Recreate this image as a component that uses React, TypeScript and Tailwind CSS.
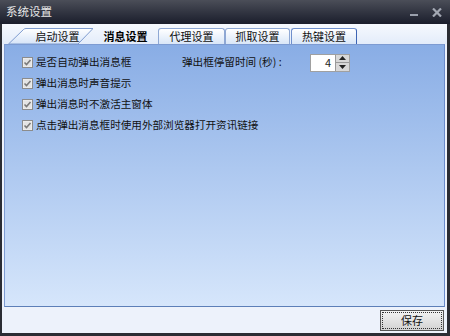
import React, { useState } from "react";

const font = { fontFamily: '"SimSun", "Noto Sans CJK SC", "Liberation Sans", sans-serif' };

const CheckBox: React.FC<{ checked: boolean; onClick: () => void }> = ({ checked, onClick }) => (
  <svg width="11" height="11" viewBox="0 0 11 11" onClick={onClick} className="shrink-0">
    <rect x="0.5" y="0.5" width="10" height="10" fill="#f2f2f2" stroke="#8c8c8c" />
    <rect x="1.5" y="1.5" width="8" height="8" fill="#e4e4e4" />
    {checked && <path d="M2.5 5.5 L4.5 7.5 L8.5 3" fill="none" stroke="#7a7a7a" strokeWidth="1.6" />}
  </svg>
);

const options = [
  "是否自动弹出消息框",
  "弹出消息时声音提示",
  "弹出消息时不激活主窗体",
  "点击弹出消息框时使用外部浏览器打开资讯链接",
];

const Tab: React.FC<{ label: string; className: string; last?: boolean }> = ({ label, className, last }) => (
  <div
    className={`flex h-[16px] items-center justify-center rounded-t-[3px] border border-b-0 bg-gradient-to-b from-[#ffffff] to-[#d9e6f8] text-[11px] leading-none text-[#111] ${
      last ? "border-[#6f8fcc] border-r-[#3d64b4]" : "border-[#8fa8d4]"
    } ${className}`}
  >
    {label}
  </div>
);

export default function App() {
  const [checked, setChecked] = useState([true, true, true, true]);
  const [seconds, setSeconds] = useState(4);

  return (
    <div className="flex h-[336px] w-[450px] flex-col bg-[#2b2d34]" style={font}>
      <div className="flex h-[24px] items-center bg-gradient-to-b from-[#4b4e58] to-[#1b1e2c] pl-[6px] pr-[8px]">
        <span className="text-[11.5px] leading-none text-[#e8e8e8]">系统设置</span>
        <div className="ml-auto flex items-center gap-[14px] text-[#9aa0ac]">
          <div className="mt-[6px] h-[2px] w-[8px] bg-[#9aa0ac]" />
          <svg width="10" height="9" viewBox="0 0 10 9">
            <path d="M1 0.5 L9 8.5 M9 0.5 L1 8.5" stroke="#a3a8b3" strokeWidth="2.2" />
          </svg>
        </div>
      </div>

      <div className="mb-[3px] ml-[2px] mr-[3px] flex flex-1 flex-col bg-[#edf2fb]">
        <div className="flex h-[20px] items-end bg-gradient-to-b from-[#f6f9fe] to-[#e3ecfa] pl-[6px]">
          <div className="relative flex h-[16px] w-[85px] items-center justify-center text-[11px] leading-none text-[#111]">
            <svg className="absolute inset-0" width="85" height="16" viewBox="0 0 85 16">
              <defs>
                <linearGradient id="t1" x1="0" y1="0" x2="0" y2="1">
                  <stop offset="0" stopColor="#ffffff" />
                  <stop offset="1" stopColor="#d6e4f8" />
                </linearGradient>
              </defs>
              <path d="M0.5 16 L15.5 1.5 Q16.5 0.5 18 0.5 L85 0.5 L70 16 Z" fill="url(#t1)" stroke="#7f9ccf" />
            </svg>
            <span className="relative pl-[14px]">启动设置</span>
          </div>
          <div className="flex h-[16px] w-[65px] items-center justify-center text-[11px] font-bold leading-none text-[#000]">
            消息设置
          </div>
          <Tab label="代理设置" className="w-[67px]" />
          <Tab label="抓取设置" className="w-[65px]" />
          <Tab label="热键设置" className="ml-[1px] w-[66px]" last />
        </div>

        <div className="mx-[2px] flex flex-1 flex-col gap-[10px] border border-[#7d9bd2] border-b-[#5d7fb8] border-r-[#6a8bcb] bg-gradient-to-b from-[#89ade5] to-[#d6e6fb] pl-[17px] pt-[12px]">
          {options.map((text, i) => (
            <div key={text} className="flex h-[11px] items-center">
              <div className={`flex items-center gap-[3px] ${i === 0 ? "w-[160px]" : ""}`}>
                <CheckBox
                  checked={checked[i]}
                  onClick={() => setChecked(checked.map((c, j) => (j === i ? !c : c)))}
                />
                <span className="text-[10.6px] leading-none text-[#111]">{text}</span>
              </div>
              {i === 0 && (
                <div className="flex items-center">
                  <span className="w-[128px] text-[10.6px] leading-none text-[#111]">弹出框停留时间 (秒) :</span>
                  <div className="flex h-[18px] w-[40px] border border-[#a0a0a0] bg-white">
                    <div className="flex flex-1 items-center justify-end pr-[4px] text-[11px] leading-none text-[#222]">
                      {seconds}
                    </div>
                    <div className="flex w-[14px] flex-col border-l border-[#9a9a9a] bg-[#d8d8d8]">
                      <button
                        className="flex flex-1 items-center justify-center border-b border-[#9a9a9a]"
                        onClick={() => setSeconds(seconds + 1)}
                      >
                        <svg width="7" height="4" viewBox="0 0 7 4">
                          <path d="M0 4 L3.5 0 L7 4 Z" fill="#222" />
                        </svg>
                      </button>
                      <button
                        className="flex flex-1 items-center justify-center"
                        onClick={() => setSeconds(Math.max(0, seconds - 1))}
                      >
                        <svg width="7" height="4" viewBox="0 0 7 4">
                          <path d="M0 0 L3.5 4 L7 0 Z" fill="#222" />
                        </svg>
                      </button>
                    </div>
                  </div>
                </div>
              )}
            </div>
          ))}
        </div>

        <div className="flex h-[26px] items-center justify-end pr-[3px]">
          <button className="flex h-[21px] w-[64px] items-center justify-center border border-[#555] bg-gradient-to-b from-[#f4f4f4] to-[#d2d2d2] p-[1px]">
            <span className="flex h-full w-full items-center justify-center border border-dotted border-[#333] text-[11px] leading-none text-[#111]">
              保存
            </span>
          </button>
        </div>
      </div>
    </div>
  );
}
